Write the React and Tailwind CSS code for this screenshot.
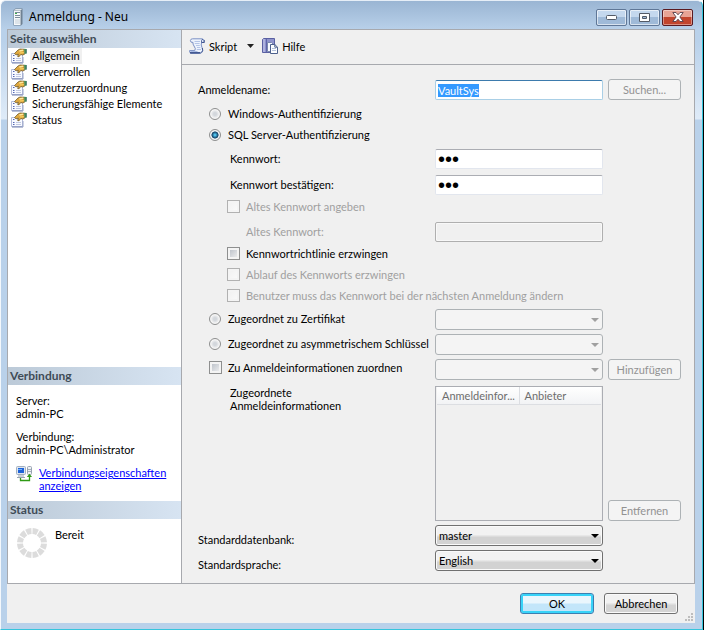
import { useEffect, useRef } from "react";

const PAGES = ["Allgemein", "Serverrollen", "Benutzerzuordnung", "Sicherungsfähige Elemente", "Status"];

function ServerIcon() {
  return (
    <svg width="16" height="18" viewBox="0 0 16 18" aria-hidden="true">
      <path d="M2.5 2 L4.5 .5 H11.5 V16 L10 17.5 H2.5 Z" fill="#6f8193" />
      <path d="M3 2.5 H9.5 V17 H3 Z" fill="#f7f9fb" />
      <path d="M3 2 L4.8 1 H11 L9.8 2.2 Z" fill="#dfe6ec" />
      <path d="M4 4.5 H9 M4 7.5 H9 M4 9.5 H9" stroke="#7d8d9b" />
      <rect x="4" y="11" width="5" height="5" fill="#dde4ea" />
      <rect x="4" y="5" width="2" height="1" fill="#3fae49" />
    </svg>
  );
}

function PageIcon() {
  return (
    <svg className="shrink-0" width="16" height="16" viewBox="0 0 16 16" aria-hidden="true">
      <path d="M.5 5.5 H11.5 V14.5 H.5 Z" fill="#f8faff" stroke="#b3bcda" />
      <path d="M1 15 H12" stroke="#7684b0" />
      <path d="M12 9 V15" stroke="#9aa5c8" />
      <path d="M2 7.5 H3.5 M2 10.5 H3.5 M2 12.5 H3.5" stroke="#5468b4" />
      <path d="M5 10.5 H10 M5 12.5 H10" stroke="#c0c8e0" />
      <path d="M3.5 5.6 L7 2 L9 1 L13 1.2 L13.4 6.4 L11.4 7 L9.8 6.4 L8 8.8 L6.6 8.4 L7.4 6.2 L5 6.8 Z" fill="#e0a93f" stroke="#5f4a1e" strokeWidth=".7" />
      <path d="M8.4 3 L12.4 2.2" stroke="#ffe9a0" strokeWidth="1.3" />
      <path d="M9 5 L12.8 4.6" stroke="#ffd667" />
      <path d="M13 .8 L15.5 1 V5.5 L13.6 6 Z" fill="#4c9450" />
      <path d="M15.2 1 V5.5" stroke="#2e5f70" strokeWidth=".8" />
    </svg>
  );
}

function ScriptIcon() {
  return (
    <svg width="16" height="16" viewBox="0 0 16 16" aria-hidden="true">
      <path d="M3.5 .8 H13.2 Q15.4 1 15.2 4.5 H12.6 Q11.6 7 13 9.5 Q14.6 12.4 12.6 14.6 Q12 15.4 10.8 15.4 H2 Q.5 15.2 .5 12.6 H5.8 Q7.2 10.6 5 8 Q3.6 6 4 4.4 Q1.4 4.8 1.4 2.6 Q1.6 .8 3.5 .8 Z" fill="#edf3fd" stroke="#7b90c4" />
      <path d="M12.6 4.5 V2.5 Q12.9 1.2 14 1.4" fill="none" stroke="#4a5f99" />
      <path d="M15.2 2 V4.5 H12.6 M13.4 10 Q14.4 12.6 12.6 14.6" fill="none" stroke="#41568f" />
      <path d="M5.5 3.5 H11 M5.8 5.5 H10.6 M7 7.5 H10.8 M8 9.5 H11.4 M7.8 11.5 H12" stroke="#b4c4e6" />
      <path d="M1 14.8 H11.5" stroke="#344a85" strokeWidth="1.4" />
      <path d="M1.5 13.5 H8.5" stroke="#a8bbe4" />
    </svg>
  );
}

function HelpIcon() {
  return (
    <svg width="16" height="16" viewBox="0 0 16 16" aria-hidden="true">
      <path d="M.5 1.5 L1.5 .5 H12.5 V12 L10.5 14.5 H.5 Z" fill="#8e93cb" stroke="#5a60a2" />
      <path d="M2 1 V14" stroke="#b9bde4" strokeWidth="1.5" />
      <path d="M4.5 1 V14" stroke="#5f65ab" />
      <path d="M5.5 4.5 H9.5 L11.5 6.5 V13.5 H5.5 Z" fill="#f6f9ff" stroke="#7b89ad" />
      <path d="M8.5 6.5 H12.8 L15.5 9.2 V15.5 H8.5 Z" fill="#fbfdff" stroke="#4c608c" />
      <path d="M12.8 6.5 V9.2 H15.5" fill="none" stroke="#4c608c" />
      <path d="M10 10.5 H14 M10 12.5 H14" stroke="#b4c1da" />
    </svg>
  );
}

function ConnectionIcon() {
  return (
    <svg className="shrink-0" width="16" height="16" viewBox="0 0 16 16" aria-hidden="true">
      <rect x=".5" y=".5" width="9" height="8" rx="1" fill="#dfe6ee" stroke="#a3b0c0" />
      <rect x="2" y="2" width="6" height="5" fill="#1d62d8" />
      <path d="M2 3.5 H6" stroke="#6fb0ff" />
      <path d="M2 10 H8 M1 11.5 H9" stroke="#98a3b1" />
      <rect x="11.5" y=".5" width="4" height="8" rx="1" fill="#eef1f5" stroke="#98a3b1" />
      <path d="M12 3.5 H15 M12 5.5 H15" stroke="#a4afba" />
      <path d="M4.5 12 V14.5 H13.5 V10" fill="none" stroke="#2f9a14" strokeWidth="1.3" />
      <path d="M10.8 11 L13.5 7.8 L16 11 Z" fill="#2f9a14" />
    </svg>
  );
}

function Spinner() {
  return (
    <svg className="shrink-0" width="30" height="30" viewBox="0 0 30 30" aria-hidden="true">
      <circle cx="15" cy="15" r="12" fill="none" stroke="#dcdcdc" strokeWidth="6" pathLength="120" strokeDasharray="8.2 1.8" strokeDashoffset="-0.9" />
    </svg>
  );
}

function SectionTitle({ children }) {
  return (
    <h2 className="h-[18px] bg-linear-to-r from-[#bccad8] to-[#d7e4f2] pl-[2px] text-[12px] leading-[18px] font-bold text-[#3f4b56]">
      {children}
    </h2>
  );
}

function Caption({ label, danger, children }) {
  return (
    <button
      aria-label={label}
      className={
        danger
          ? "flex h-[17px] w-[31px] items-center justify-center rounded-[2px] border border-[#5a1a20] bg-linear-to-b from-[#e8a495] from-45% to-[#c2452d] to-50% shadow-[inset_0_0_0_1px_#ffffff66]"
          : "flex h-[17px] w-[31px] items-center justify-center rounded-[2px] border border-[#5f7797] bg-linear-to-b from-[#c4d8ee] from-45% to-[#9fbad8] to-50% shadow-[inset_0_0_0_1px_#ffffff99]"
      }
    >
      {children}
    </button>
  );
}

function Push({ children, disabled, primary }) {
  const look = disabled
    ? "border-[#adb2b5] bg-[#f4f4f4] text-[#929292]"
    : primary
      ? "border-[#3c7fb1] bg-linear-to-b from-[#eaf6fd] from-45% to-[#c3e6fa] to-55% text-black shadow-[inset_0_0_0_2px_#38d3f8]"
      : "border-[#707070] bg-linear-to-b from-[#f2f2f2] from-45% to-[#d4d4d4] to-60% text-black shadow-[inset_0_0_0_1px_#fafafa]";
  return (
    <button disabled={disabled} className={`h-[21px] w-full rounded-[3px] border text-[11px] leading-[19px] ${look}`}>
      {children}
    </button>
  );
}

function Combo({ id, label, value, disabled }) {
  return (
    <div className="relative h-[21px]">
      <select
        id={id}
        aria-label={label}
        disabled={disabled}
        defaultValue={value}
        className={
          disabled
            ? "h-full w-full appearance-none rounded-[3px] border border-[#adb2b5] bg-[#f4f4f4] opacity-100"
            : "h-full w-full appearance-none rounded-[3px] border border-[#707070] bg-linear-to-b from-[#f2f2f2] from-45% to-[#d2d2d2] to-60% pl-[3px] text-[11px] shadow-[inset_0_0_0_1px_#fafafa]"
        }
      >
        <option>{value}</option>
      </select>
      <svg className="pointer-events-none absolute top-[9px] right-[4px]" width="8" height="4" viewBox="0 0 8 4" aria-hidden="true">
        <path d="M0 0 H8 L4 4 Z" fill={disabled ? "#a0a0a0" : "#000"} />
      </svg>
    </div>
  );
}

function Radio({ id, checked, children }) {
  return (
    <div className="flex h-[19px] items-center gap-[7px] pl-[11px]">
      <input
        type="radio"
        id={id}
        name="auth"
        defaultChecked={checked}
        className="size-[12px] shrink-0 appearance-none rounded-full border border-[#8e8f8f] bg-radial from-[#d3d7dc] from-20% to-[#f4f4f4] to-60% shadow-[inset_0_0_0_1px_#f6f6f6] checked:bg-radial checked:from-[#4fc0ea] checked:from-10% checked:via-[#123f63] checked:via-45% checked:to-[#eef2f5] checked:to-55%"
      />
      <label htmlFor={id} className="whitespace-nowrap">{children}</label>
    </div>
  );
}

function Check({ id, disabled, outer, children }) {
  return (
    <div className={outer ? "flex h-[16px] items-center gap-[6px] pl-[11px]" : "flex h-[21px] items-center gap-[6px] pl-[29px]"}>
      <input
        type="checkbox"
        id={id}
        disabled={disabled}
        className="size-[13px] shrink-0 appearance-none border border-[#8e8f8f] bg-linear-to-br from-[#b4bac3] to-[#f6f6f6] shadow-[inset_0_0_0_2px_#f4f4f4] disabled:border-[#b1b1b1] disabled:from-[#f0f0f0] disabled:to-[#fbfbfb]"
      />
      <label htmlFor={id} className={disabled ? "whitespace-nowrap text-[#a0a0a0]" : "whitespace-nowrap"}>{children}</label>
    </div>
  );
}

const ROW = "grid grid-cols-[232px_minmax(0,1fr)_73px] gap-x-[5px]";
const FIELD = "h-[20px] w-full rounded-[2px] border px-[2px] outline-none";
const SECRET = "border-[#e2e6ee] border-t-[#abadb3] bg-white font-['Liberation_Sans',Arial,sans-serif] text-[20px] leading-[18px]";

export default function App() {
  const nameRef = useRef(null);
  useEffect(() => {
    nameRef.current.focus();
    nameRef.current.select();
  }, []);

  return (
    <div className="min-h-screen border-r border-black bg-white font-[Lato,'Liberation_Sans',Arial,sans-serif] text-[11px] leading-[13px] text-black">
      <div className="flex min-h-screen flex-col rounded-t-[6px] border-t border-r border-b border-l border-t-[#e6eef7] border-r-[#35c5dc] border-b-[#35c5dc] border-l-[#f4f8fc] bg-[#b9d1ea] bg-[linear-gradient(#9ab5d3,#b9d1ea_29px,#b9d1ea_40px,#dfebf8_118px,#b9d1ea_119px)] pr-[7px] pb-[6px] pl-[6px]">
        <header className="flex h-[28px] items-center pt-[4px] pl-[4px]">
          <ServerIcon />
          <h1 className="flex-1 pl-[2px] font-['Noto_Sans',sans-serif] text-[12px] leading-[16px]">Anmeldung - Neu</h1>
          <div className="flex gap-[2px] pr-[2px]">
            <Caption label="Minimieren">
              <svg width="12" height="6" viewBox="0 0 12 6" aria-hidden="true"><rect x=".5" y="1.5" width="10" height="4" rx="1" fill="#fff" stroke="#535a66" /></svg>
            </Caption>
            <Caption label="Maximieren">
              <svg width="11" height="9" viewBox="0 0 11 9" aria-hidden="true"><path fillRule="evenodd" d="M.5 .5 H10.5 V8.5 H.5 Z M3.5 3.5 H7.5 V5.5 H3.5 Z" fill="#fff" stroke="#535a66" /></svg>
            </Caption>
            <Caption label="Schließen" danger>
              <svg width="12" height="10" viewBox="0 0 12 10" aria-hidden="true"><path d="M.8 .5 H4 L6 2.8 L8 .5 H11.2 L7.9 5 L11.2 9.5 H8 L6 7.2 L4 9.5 H.8 L4.1 5 Z" fill="#fff" stroke="#57404a" strokeWidth=".9" /></svg>
            </Caption>
          </div>
        </header>

        <div className="flex flex-1 flex-col bg-[#f0f0f0]">
          <div className="flex flex-1 border border-[#a7a9ae]">
            <aside className="flex w-[174px] shrink-0 flex-col border-r border-[#a7a9ae] bg-white">
              <SectionTitle>Seite auswählen</SectionTitle>
              <nav className="flex-1 pl-[3px]">
                <ul>
                  {PAGES.map((page, i) => (
                    <li key={page} className="flex h-[16px] items-center gap-[3px]">
                      <PageIcon />
                      <a href="#" className={i === 0 ? "bg-[#f0f0f0] px-[2px] leading-[16px]" : "px-[2px] leading-[16px]"}>{page}</a>
                    </li>
                  ))}
                </ul>
              </nav>
              <SectionTitle>Verbindung</SectionTitle>
              <div className="h-[116px] pt-[9px] pl-[8px]">
                <p>Server:</p>
                <p>admin-PC</p>
                <p className="pt-[10px]">Verbindung:</p>
                <p>admin-PC\Administrator</p>
                <div className="flex gap-[7px] pt-[10px]">
                  <ConnectionIcon />
                  <a href="#" className="text-[#0000ff] underline">Verbindungseigenschaften<br />anzeigen</a>
                </div>
              </div>
              <SectionTitle>Status</SectionTitle>
              <div className="flex h-[64px] gap-[8px] pt-[9px] pl-[9px]">
                <Spinner />
                <p>Bereit</p>
              </div>
            </aside>

            <main className="min-w-0 flex-1">
              <div className="flex h-[35px] items-center border-b border-[#a7a9ae] pb-[2px] pl-[7px]">
                <button className="flex items-center gap-[4px]"><ScriptIcon />Skript</button>
                <button aria-label="Skriptoptionen" className="pr-[8px] pl-[10px]">
                  <svg width="7" height="4" viewBox="0 0 7 4" aria-hidden="true"><path d="M0 0 H7 L3.5 4 Z" fill="#222" /></svg>
                </button>
                <button className="flex items-center gap-[4px]"><HelpIcon />Hilfe</button>
              </div>

              <form className="pt-[14px] pr-[13px] pb-[12px] pl-[16px]" onSubmit={(e) => e.preventDefault()}>
                <div className={`${ROW} items-end`}>
                  <label htmlFor="login" className="leading-[20px]">Anmeldename:</label>
                  <input
                    ref={nameRef}
                    id="login"
                    defaultValue="VaultSys"
                    className={`${FIELD} border-[#a9cfe6] border-t-[#3d7bad] bg-white selection:bg-[#3399ff] selection:text-white`}
                  />
                  <Push disabled>Suchen...</Push>
                </div>
                <div className="flex flex-col gap-[2px] pt-[4px] pb-px">
                  <Radio id="win">Windows-Authentifizierung</Radio>
                  <Radio id="sql" checked>SQL Server-Authentifizierung</Radio>
                </div>
                <div className="flex flex-col gap-[6px] pt-[4px] pb-px leading-[20px]">
                  <div className={ROW}>
                    <label htmlFor="pw" className="pl-[32px]">Kennwort:</label>
                    <input id="pw" type="password" defaultValue="abc" className={`${FIELD} ${SECRET}`} />
                  </div>
                  <div className={ROW}>
                    <label htmlFor="pw2" className="pl-[32px]">Kennwort bestätigen:</label>
                    <input id="pw2" type="password" defaultValue="abc" className={`${FIELD} ${SECRET}`} />
                  </div>
                </div>
                <Check id="oldcheck" disabled>Altes Kennwort angeben</Check>
                <div className={`${ROW} pt-[5px] pb-px leading-[20px]`}>
                  <label htmlFor="oldpw" className="pl-[48px] text-[#a0a0a0]">Altes Kennwort:</label>
                  <input id="oldpw" type="password" disabled className={`${FIELD} border-[#afafaf] bg-[#f0f0f0] shadow-[inset_0_0_0_1px_#f8f8f8]`} />
                </div>
                <Check id="policy">Kennwortrichtlinie erzwingen</Check>
                <Check id="expire" disabled>Ablauf des Kennworts erzwingen</Check>
                <Check id="change" disabled>Benutzer muss das Kennwort bei der nächsten Anmeldung ändern</Check>
                <div className="flex flex-col gap-[4px] pt-[3px]">
                  <div className={ROW}>
                    <Radio id="cert">Zugeordnet zu Zertifikat</Radio>
                    <Combo label="Zertifikat" value="" disabled />
                  </div>
                  <div className={ROW}>
                    <Radio id="asym">Zugeordnet zu asymmetrischem Schlüssel</Radio>
                    <Combo label="Asymmetrischer Schlüssel" value="" disabled />
                  </div>
                  <div className={ROW}>
                    <Check id="cred" outer>Zu Anmeldeinformationen zuordnen</Check>
                    <Combo label="Anmeldeinformationen" value="" disabled />
                    <Push disabled>Hinzufügen</Push>
                  </div>
                </div>
                <div className={`${ROW} pt-[6px]`}>
                  <p className="pl-[32px]">Zugeordnete<br />Anmeldeinformationen</p>
                  <div className="h-[135px] border border-[#abadb3] p-px pt-0">
                    <table className="w-full table-fixed text-[#6d6d6d]">
                      <thead>
                        <tr className="h-[17px] bg-linear-to-b from-white to-[#f2f3f5]">
                          <th className="w-1/2 border-r border-b border-[#dcdee2] pl-[5px] text-left font-normal">Anmeldeinfor...</th>
                          <th className="border-b border-[#dcdee2] pl-[5px] text-left font-normal">Anbieter</th>
                        </tr>
                      </thead>
                    </table>
                  </div>
                  <div className="flex items-end"><Push disabled>Entfernen</Push></div>
                </div>
                <div className="flex flex-col gap-[4px] pt-[4px]">
                  <div className={`${ROW} items-end`}>
                    <label htmlFor="db">Standarddatenbank:</label>
                    <Combo id="db" value="master" />
                  </div>
                  <div className={`${ROW} items-end`}>
                    <label htmlFor="lang">Standardsprache:</label>
                    <Combo id="lang" value="English" />
                  </div>
                </div>
              </form>
            </main>
          </div>

          <footer className="relative flex h-[39px] justify-end gap-[10px] pt-[9px] pr-[17px]">
            <div className="w-[74px]"><Push primary>OK</Push></div>
            <div className="w-[74px]"><Push>Abbrechen</Push></div>
            <svg className="absolute right-[1px] bottom-[1px]" width="10" height="10" viewBox="0 0 10 10" aria-hidden="true">
              <path d="M7 1h2v2h-2z M7 4h2v2h-2z M4 4h2v2h-2z M7 7h2v2h-2z M4 7h2v2h-2z M1 7h2v2h-2z" fill="#bdbdbd" />
            </svg>
          </footer>
        </div>
      </div>
    </div>
  );
}
